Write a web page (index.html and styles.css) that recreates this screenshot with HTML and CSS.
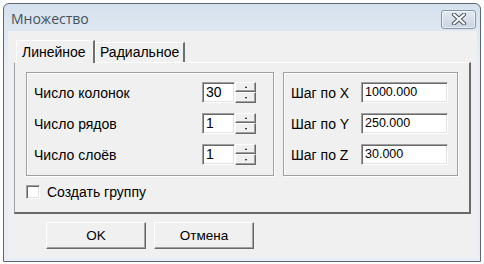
FILE: index.html
```html
<!DOCTYPE html>
<html lang="ru">
<head>
    <meta charset="UTF-8">
    <title>Множество</title>
    <link rel="stylesheet" href="styles.css">
</head>
<body>

    <div class="window">
        <!-- заголовок окна -->
        <div class="titlebar">
            <span class="title">Множество</span>
            <button class="close" type="button">
                <svg width="16" height="12" viewBox="0 0 16 12">
                    <path d="M3 1.5 L13 10.5 M13 1.5 L3 10.5" stroke="#4a5665" stroke-width="4.2" stroke-linecap="round"/>
                    <path d="M3 1.5 L13 10.5 M13 1.5 L3 10.5" stroke="#ffffff" stroke-width="2.2" stroke-linecap="round"/>
                </svg>
            </button>
        </div>

        <div class="client">
            <!-- вкладки -->
            <div class="tabs">
                <div class="tab active">Линейное</div>
                <div class="tab">Радиальное</div>
            </div>

            <div class="panel">
                <div class="groups">
                    <div class="group counts">
                        <div class="row">
                            <span class="label">Число колонок</span>
                            <div class="spin">
                                <div class="field">30</div>
                                <div class="arrows">
                                    <span class="arrow up"></span>
                                    <span class="arrow down"></span>
                                </div>
                            </div>
                        </div>
                        <div class="row">
                            <span class="label">Число рядов</span>
                            <div class="spin">
                                <div class="field">1</div>
                                <div class="arrows">
                                    <span class="arrow up"></span>
                                    <span class="arrow down"></span>
                                </div>
                            </div>
                        </div>
                        <div class="row">
                            <span class="label">Число слоёв</span>
                            <div class="spin">
                                <div class="field">1</div>
                                <div class="arrows">
                                    <span class="arrow up"></span>
                                    <span class="arrow down"></span>
                                </div>
                            </div>
                        </div>
                    </div>

                    <div class="group steps">
                        <div class="row">
                            <span class="label">Шаг по X</span>
                            <div class="field wide">1000.000</div>
                        </div>
                        <div class="row">
                            <span class="label">Шаг по Y</span>
                            <div class="field wide">250.000</div>
                        </div>
                        <div class="row">
                            <span class="label">Шаг по Z</span>
                            <div class="field wide">30.000</div>
                        </div>
                    </div>
                </div>

                <label class="check">
                    <span class="box"></span>
                    Создать группу
                </label>
            </div>

            <!-- кнопки -->
            <div class="buttons">
                <button class="btn" type="button">OK</button>
                <button class="btn" type="button">Отмена</button>
            </div>
        </div>
    </div>

</body>
</html>
```

FILE: styles.css
```css
* {
    box-sizing: border-box;
}

body {
    margin: 0;
    padding: 3px;
    background-color: #ffffff;
    font-family: "Liberation Sans", Arial, sans-serif;
    font-size: 14px;
    color: #000000;
}

.window {
    width: 478px;
    height: 259px;
    border: 1px solid #5d6673;
    border-radius: 6px 6px 0 0;
    background: linear-gradient(#d5e1ee, #dfe8f2 30px, #e9eef4 60px);
    display: flex;
    flex-direction: column;
}

.titlebar {
    height: 27px;
    display: flex;
    align-items: center;
    justify-content: space-between;
    padding: 0 4px 0 7px;
}

.title {
    font-family: "Open Sans", "Liberation Sans", sans-serif;
    font-size: 14px;
    color: #44525f;
    margin-top: 2px;
}

.close {
    width: 35px;
    height: 19px;
    margin-top: 3px;
    padding: 0;
    border: 1px solid #8796a8;
    border-radius: 3px;
    background: linear-gradient(#e2e9f1, #c9d5e2);
    box-shadow: inset 0 0 0 1px rgba(255, 255, 255, 0.6);
    display: flex;
    align-items: center;
    justify-content: center;
}

.client {
    flex: 1;
    margin: 0 3px 4px 4px;
    background-color: #f0f0f0;
    padding: 9px 0 0 6px;
}

/* вкладки */
.tabs {
    display: flex;
    align-items: flex-end;
    margin-left: 2px;
    height: 22px;
}

.tab {
    height: 20px;
    padding: 0 6px;
    line-height: 19px;
    border-top: 1px solid #ffffff;
    border-left: 1px solid #ffffff;
    border-right: 2px solid #6f6f6f;
    background-color: #f0f0f0;
}

.tab.active {
    height: 23px;
    margin-bottom: -1px;
    position: relative;
    z-index: 1;
    padding: 0 7px 0 5px;
    line-height: 22px;
    width: 79px;
}

.tab:not(.active) {
    width: 90px;
    padding-left: 4px;
}

.panel {
    width: 457px;
    height: 152px;
    border-top: 1px solid #ffffff;
    border-left: 1px solid #a0a0a0;
    border-right: 2px solid #696969;
    border-bottom: 2px solid #696969;
    padding: 9px 0 0 11px;
}

.groups {
    display: flex;
    gap: 9px;
}

.group {
    height: 104px;
    border: 1px solid #a0a0a0;
    box-shadow: 1px 1px 0 #ffffff, inset 1px 1px 0 #ffffff;
    padding: 9px 0 0 7px;
    display: flex;
    flex-direction: column;
    gap: 10px;
}

.counts {
    width: 248px;
}

.steps {
    width: 175px;
}

.row {
    display: flex;
    align-items: center;
    height: 21px;
}

.counts .label {
    width: 168px;
}

.steps .label {
    width: 70px;
}

.field {
    height: 21px;
    background-color: #ffffff;
    border-top: 1px solid #a0a0a0;
    border-left: 1px solid #a0a0a0;
    border-right: 1px solid #ffffff;
    border-bottom: 1px solid #ffffff;
    box-shadow: inset 1px 1px 0 #696969, inset -1px -1px 0 #e3e3e3;
    padding: 1px 0 0 3px;
    font-size: 12.5px;
    line-height: 17px;
}

.spin {
    display: flex;
}

.spin .field {
    width: 33px;
    font-size: 14px;
}

.field.wide {
    width: 87px;
}

.arrows {
    width: 21px;
    height: 21px;
    display: flex;
    flex-direction: column;
}

.arrow {
    height: 10px;
    background-color: #f0f0f0;
    border-top: 1px solid #ffffff;
    border-left: 1px solid #ffffff;
    border-right: 1px solid #696969;
    border-bottom: 1px solid #696969;
    box-shadow: inset -1px -1px 0 #a0a0a0;
    display: flex;
    align-items: center;
    justify-content: center;
}

.arrow.down {
    height: 11px;
}

.arrow::after {
    content: "";
    width: 0;
    height: 0;
    border-left: 1.5px solid transparent;
    border-right: 1.5px solid transparent;
}

.arrow.up::after {
    border-bottom: 2px solid #000000;
}

.arrow.down::after {
    border-top: 2px solid #000000;
}

.check {
    display: flex;
    align-items: center;
    gap: 7px;
    margin-top: 9px;
    height: 14px;
}

.box {
    width: 14px;
    height: 14px;
    background-color: #ffffff;
    border-top: 1px solid #a0a0a0;
    border-left: 1px solid #a0a0a0;
    border-right: 1px solid #ffffff;
    border-bottom: 1px solid #ffffff;
    box-shadow: inset 1px 1px 0 #696969, inset -1px -1px 0 #e3e3e3;
}

/* кнопки */
.buttons {
    display: flex;
    gap: 8px;
    margin: 8px 0 0 32px;
}

.btn {
    width: 100px;
    height: 27px;
    padding: 0;
    font-family: "Liberation Sans", Arial, sans-serif;
    font-size: 13.5px;
    color: #000000;
    background-color: #f0f0f0;
    border-top: 1px solid #ffffff;
    border-left: 1px solid #ffffff;
    border-right: 1px solid #696969;
    border-bottom: 1px solid #696969;
    box-shadow: inset -1px -1px 0 #a0a0a0;
}
```
